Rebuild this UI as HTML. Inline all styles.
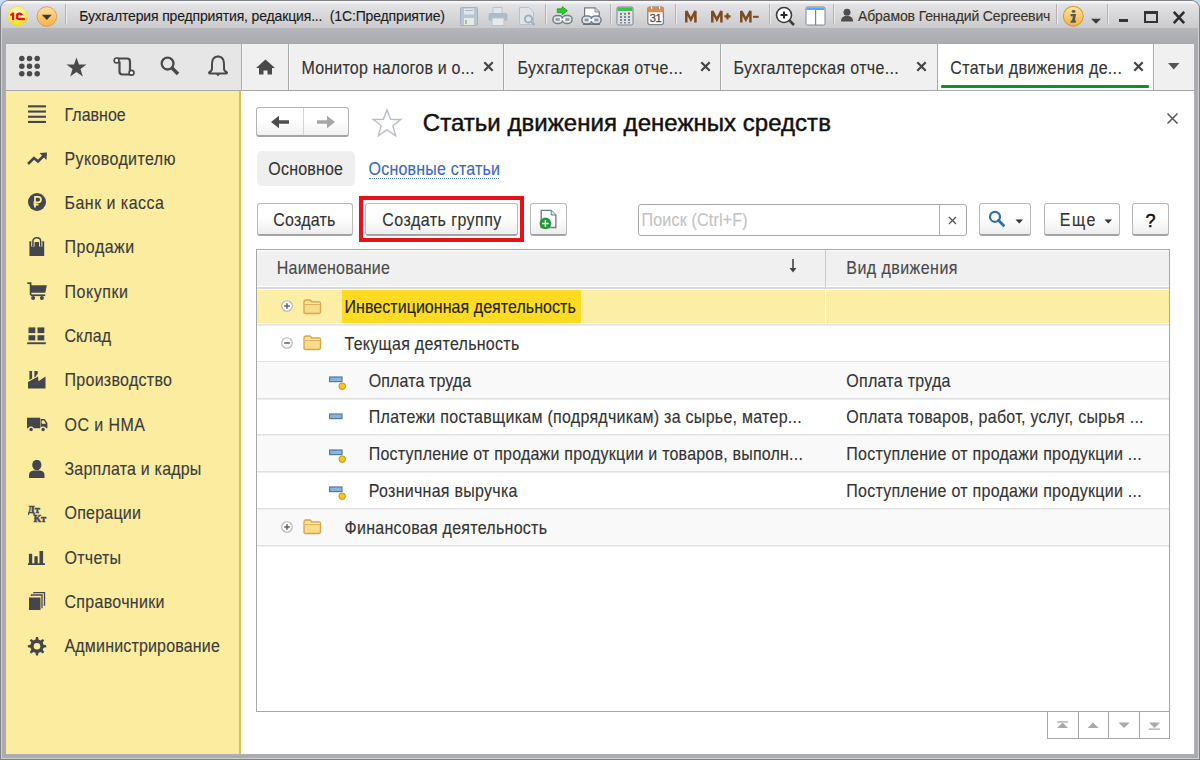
<!DOCTYPE html>
<html><head><meta charset="utf-8">
<style>
*{margin:0;padding:0;box-sizing:border-box}
html,body{width:1200px;height:760px;overflow:hidden;background:#bedcf5}
body{font-family:"Liberation Sans",sans-serif;position:relative}
.a{position:absolute}
.t{white-space:nowrap;-webkit-text-stroke:0.12px currentColor}
</style></head><body>
<div class="a" style="left:0.00px;top:0.00px;width:1200.00px;height:760.00px;background:#abacaf;border-radius:9px 9px 0 0;box-shadow:inset 0 0 0 1px #808184, inset 0 0 0 2px #cfd0d2"></div>
<div class="a" style="left:1.00px;top:1.00px;width:1198.00px;height:27.00px;border-radius:8px 8px 0 0;background:linear-gradient(#f6f6f7 0,#f6f6f7 1.5px,#e3e3e5 3.5px,#cbcbce 27px)"></div>
<div class="a" style="left:2.00px;top:28.00px;width:1196.00px;height:16.00px;background:linear-gradient(#b5b6b9,#aaabae)"></div>
<svg class="a" style="left:7.00px;top:6.00px" width="22" height="22" viewBox="0 0 22 22"><defs><radialGradient id="g1" cx="50%" cy="30%" r="70%"><stop offset="0" stop-color="#fffbd0"/><stop offset="0.55" stop-color="#fff070"/><stop offset="1" stop-color="#ffd800"/></radialGradient></defs>
<circle cx="10.65" cy="10.15" r="9.8" fill="url(#g1)" stroke="#efd35a" stroke-width="0.7"/>
<path d="M3.1 8.2 L5.6 6.6 L7.2 6.6 L7.2 14.1 L5 14.1 L5 9.4 L3.6 10.1 Z" fill="#e8101a"/>
<path d="M10.2 13 L10.2 9.3 Q10.2 7.7 12.3 7.7 Q14.3 7.7 15 9.3" fill="none" stroke="#e8101a" stroke-width="2.3"/>
<rect x="10.4" y="11.9" width="7.4" height="2.2" fill="#e8101a"/></svg>
<svg class="a" style="left:36.00px;top:6.00px" width="22" height="22" viewBox="0 0 22 22"><defs><linearGradient id="g2" x1="0" y1="0" x2="0" y2="1"><stop offset="0" stop-color="#ffe0a8"/><stop offset="1" stop-color="#fbb040"/></linearGradient></defs>
<circle cx="10.8" cy="10.5" r="9.8" fill="url(#g2)" stroke="#d6a24a" stroke-width="1"/>
<path d="M5.8 8.8 L15.8 8.8 L10.8 13.9 Z" fill="#3f3a32"/></svg>
<div class="a" style="left:65.00px;top:4.00px;width:1.00px;height:20.00px;background:#b3b3b5;box-shadow:1px 0 0 #ebebec"></div>
<div class="a t" style="left:79.20px;top:9.45px;font-size:14px;line-height:14px;color:#1b1b1b;letter-spacing:-0.15px">Бухгалтерия предприятия, редакция...&nbsp; (1С:Предприятие)</div>
<svg class="a" style="left:459.00px;top:7.00px" width="20" height="19" viewBox="0 0 20 19"><rect x="1.5" y="0.5" width="17" height="18" rx="1" fill="#b8c5d2" stroke="#a3b2c0"/>
<rect x="5" y="1.5" width="10" height="6" fill="#dfe6ec"/><rect x="6" y="3" width="8" height="1" fill="#a9b8c6"/>
<rect x="5" y="11" width="10" height="7" fill="#e6ece0"/><rect x="6" y="13" width="2" height="4" fill="#a9b8c6"/></svg>
<svg class="a" style="left:488.00px;top:7.00px" width="20" height="19" viewBox="0 0 20 19"><rect x="5" y="0.5" width="9" height="6" fill="#e2e6ea" stroke="#b9c3cc"/>
<rect x="0.5" y="6" width="19" height="8" rx="2" fill="#aebbc7"/>
<rect x="4" y="11" width="12" height="7.5" fill="#e6eaee" stroke="#b9c3cc"/></svg>
<svg class="a" style="left:518.00px;top:7.00px" width="20" height="20" viewBox="0 0 20 20"><path d="M1.5 0.5 L11 0.5 L15.5 5 L15.5 17.5 L1.5 17.5 Z" fill="#e0e4e8" stroke="#b7c2cc"/>
<circle cx="10.5" cy="12" r="3.6" fill="none" stroke="#9fb0be" stroke-width="2"/>
<path d="M13 14.5 L16.5 18" stroke="#9fb0be" stroke-width="2.2"/></svg>
<div class="a" style="left:545.00px;top:4.00px;width:1.00px;height:20.00px;background:#b3b3b5;box-shadow:1px 0 0 #ebebec"></div>
<svg class="a" style="left:551.00px;top:5.00px" width="23" height="20" viewBox="0 0 23 20"><path d="M6.3 3.8 L11.2 3.8 L11.2 1.6 L16.4 5.7 L11.2 9.8 L11.2 7.6 L6.3 7.6 Z" fill="#24d024" stroke="#129a1e" stroke-width="0.8"/><rect x="1.9" y="10.6" width="10" height="7.8" rx="3.9" fill="#e4e7ea" stroke="#737d88" stroke-width="1.5"/><rect x="11.1" y="10.6" width="10" height="7.8" rx="3.9" fill="#e4e7ea" stroke="#737d88" stroke-width="1.5"/><rect x="4.6" y="13.2" width="4.2" height="2.6" fill="#8e98a2"/><rect x="14.2" y="13.2" width="4.2" height="2.6" fill="#8e98a2"/><rect x="8.8" y="13.6" width="5.4" height="1.8" fill="#fff"/></svg>
<svg class="a" style="left:580.00px;top:6.00px" width="23" height="20" viewBox="0 0 23 20"><path d="M4.6 1.8 L15 1.8 L19.2 6 L19.2 11 L4.6 11 Z" fill="#fff" stroke="#6f7984" stroke-width="1.2"/><path d="M15 1.8 L15 6 L19.2 6" fill="#cfd6de" stroke="#6f7984" stroke-width="0.8"/><rect x="1.9" y="10.1" width="10" height="7.8" rx="3.9" fill="#e4e7ea" stroke="#737d88" stroke-width="1.5"/><rect x="11.1" y="10.1" width="10" height="7.8" rx="3.9" fill="#e4e7ea" stroke="#737d88" stroke-width="1.5"/><rect x="4.6" y="12.7" width="4.2" height="2.6" fill="#8e98a2"/><rect x="14.2" y="12.7" width="4.2" height="2.6" fill="#8e98a2"/><rect x="8.8" y="13.1" width="5.4" height="1.8" fill="#fff"/><rect x="3" y="17.6" width="17" height="1.2" fill="#5b6570"/></svg>
<div class="a" style="left:610.00px;top:4.00px;width:1.00px;height:20.00px;background:#b3b3b5;box-shadow:1px 0 0 #ebebec"></div>
<svg class="a" style="left:616.00px;top:6.00px" width="18" height="20" viewBox="0 0 18 20"><rect x="1" y="1" width="16" height="18" rx="1.5" fill="#dfe3e8" stroke="#7d8791"/>
<rect x="1.5" y="1.5" width="15" height="3.5" fill="#3fc04a"/>
<g fill="#7d8791"><rect x="4" y="7" width="2" height="2"/><rect x="8" y="7" width="2" height="2"/><rect x="4" y="10" width="2" height="2"/><rect x="8" y="10" width="2" height="2"/><rect x="12" y="10" width="2" height="2"/><rect x="4" y="13" width="2" height="2"/><rect x="8" y="13" width="2" height="2"/><rect x="12" y="13" width="2" height="2"/><rect x="4" y="16" width="2" height="1.5"/><rect x="8" y="16" width="2" height="1.5"/><rect x="12" y="16" width="2" height="1.5"/></g>
<rect x="12" y="6.5" width="2" height="2" fill="#e8383d"/></svg>
<svg class="a" style="left:646.00px;top:6.00px" width="19" height="20" viewBox="0 0 19 20"><rect x="1.8" y="1.2" width="15.6" height="17.4" rx="2" fill="#fff" stroke="#7d8791" stroke-width="1.3"/>
<path d="M1.2 6.3 L1.2 3.2 Q1.2 0.8 3.6 0.8 L15.6 0.8 Q18 0.8 18 3.2 L18 6.3 Z" fill="#d58b52"/>
<rect x="5" y="0.6" width="1.2" height="2.6" fill="#fff"/><rect x="13" y="0.6" width="1.2" height="2.6" fill="#fff"/>
<text x="9.6" y="16.2" font-family="Liberation Sans" font-size="11" text-anchor="middle" fill="#4d4d4d" stroke="#4d4d4d" stroke-width="0.3" letter-spacing="-0.3">31</text></svg>
<div class="a" style="left:675.00px;top:4.00px;width:1.00px;height:20.00px;background:#b3b3b5;box-shadow:1px 0 0 #ebebec"></div>
<svg class="a" style="left:685.00px;top:10.00px" width="12" height="13" viewBox="0 0 12 13"><path d="M1.3 12.6 L1.3 1 L5.85 9.6 L10.4 1 L10.4 12.6" fill="none" stroke="#7e4b1f" stroke-width="2.5" stroke-linejoin="miter"/></svg>
<svg class="a" style="left:711.00px;top:10.00px" width="21" height="13" viewBox="0 0 21 13"><path d="M1.3 12.6 L1.3 1 L5.85 9.6 L10.4 1 L10.4 12.6" fill="none" stroke="#7e4b1f" stroke-width="2.5" stroke-linejoin="miter"/><path d="M13.4 6.4 L19.6 6.4 M16.5 3.3 L16.5 9.5" stroke="#7e4b1f" stroke-width="2.2"/></svg>
<svg class="a" style="left:740.00px;top:10.00px" width="20" height="13" viewBox="0 0 20 13"><path d="M1.3 12.6 L1.3 1 L5.85 9.6 L10.4 1 L10.4 12.6" fill="none" stroke="#7e4b1f" stroke-width="2.5" stroke-linejoin="miter"/><path d="M13 6.8 L18.7 6.8" stroke="#7e4b1f" stroke-width="2"/></svg>
<div class="a" style="left:769.00px;top:4.00px;width:1.00px;height:20.00px;background:#b3b3b5;box-shadow:1px 0 0 #ebebec"></div>
<svg class="a" style="left:775.00px;top:6.00px" width="21" height="20" viewBox="0 0 21 20"><circle cx="9" cy="9" r="7.5" fill="#fff" stroke="#3a3a3a" stroke-width="1.6"/>
<path d="M5.5 9 L12.5 9 M9 5.5 L9 12.5" stroke="#2a2a2a" stroke-width="2"/>
<path d="M14.2 14.2 L19 19" stroke="#3a3a3a" stroke-width="2.6"/></svg>
<svg class="a" style="left:805.00px;top:6.00px" width="21" height="20" viewBox="0 0 21 20"><rect x="1" y="1" width="19" height="18" rx="1.5" fill="#fff" stroke="#7b8694"/>
<rect x="1.5" y="1.5" width="18" height="2.5" fill="#55a8ee"/>
<rect x="10" y="4" width="1.2" height="15" fill="#7b8694"/></svg>
<div class="a" style="left:833.00px;top:4.00px;width:1.00px;height:20.00px;background:#b3b3b5;box-shadow:1px 0 0 #ebebec"></div>
<svg class="a" style="left:840.00px;top:8.00px" width="14" height="14" viewBox="0 0 14 14"><circle cx="7" cy="4.2" r="3.5" fill="#4d4d4d"/><path d="M1 13.5 C1 9.5 3 8 7 8 C11 8 13 9.5 13 13.5 Z" fill="#4d4d4d"/></svg>
<div class="a t" style="left:858.00px;top:9.45px;font-size:14px;line-height:14px;color:#3a3228;letter-spacing:-0.13px">Абрамов Геннадий Сергеевич</div>
<div class="a" style="left:1056.00px;top:4.00px;width:1.00px;height:20.00px;background:#b3b3b5;box-shadow:1px 0 0 #ebebec"></div>
<svg class="a" style="left:1062.00px;top:5.00px" width="23" height="23" viewBox="0 0 23 23"><defs><linearGradient id="g3" x1="0" y1="0" x2="0" y2="1"><stop offset="0" stop-color="#ffe4a0"/><stop offset="1" stop-color="#f6b23e"/></linearGradient></defs>
<circle cx="11.3" cy="11.2" r="9.9" fill="url(#g3)" stroke="#c99e3e" stroke-width="1.1"/>
<ellipse cx="11.6" cy="6.4" rx="1.9" ry="1.3" fill="#58595a"/><path d="M8.8 8.9 L14.2 8.9 L12.9 15.4 L14.2 15.4 L13.6 17.8 L8.4 17.8 L8.9 15.4 L10 15.4 L10.9 11.2 L8.4 11.2 Z" fill="#58595a"/></svg>
<svg class="a" style="left:1090.00px;top:18.00px" width="12" height="7" viewBox="0 0 12 7"><path d="M1 0.8 L11 0.8 L6 5.8 Z" fill="#3c3c3c"/></svg>
<div class="a" style="left:1107.00px;top:4.00px;width:1.00px;height:20.00px;background:#b3b3b5;box-shadow:1px 0 0 #ebebec"></div>
<div class="a" style="left:1118.50px;top:18.80px;width:9.50px;height:3.00px;background:#333"></div>
<div class="a" style="left:1144.40px;top:10.60px;width:13.60px;height:12.60px;border:2px solid #333;border-top-width:3px"></div>
<svg class="a" style="left:1172.00px;top:10.00px" width="14" height="15" viewBox="0 0 14 15"><path d="M1.8 1.8 L12.2 13.2 M12.2 1.8 L1.8 13.2" stroke="#2e2e2e" stroke-width="2.6"/></svg>
<div class="a" style="left:6.00px;top:44.00px;width:1188.00px;height:710.00px;background:#fff"></div>
<div class="a" style="left:6.00px;top:44.00px;width:235.00px;height:46.00px;background:#e6e6e6"></div>
<div class="a" style="left:241.00px;top:44.00px;width:953.00px;height:46.00px;background:#f0f0f0"></div>
<div class="a" style="left:6.00px;top:90.00px;width:1188.00px;height:1.00px;background:#a8a8a8"></div>
<svg class="a" style="left:18.00px;top:55.00px" width="24" height="24" viewBox="0 0 24 24"><circle cx="3.8" cy="3.5" r="2.75" fill="#4a4a4a"/><circle cx="3.8" cy="11.2" r="2.75" fill="#4a4a4a"/><circle cx="3.8" cy="18.8" r="2.75" fill="#4a4a4a"/><circle cx="11.5" cy="3.5" r="2.75" fill="#4a4a4a"/><circle cx="11.5" cy="11.2" r="2.75" fill="#4a4a4a"/><circle cx="11.5" cy="18.8" r="2.75" fill="#4a4a4a"/><circle cx="19.2" cy="3.5" r="2.75" fill="#4a4a4a"/><circle cx="19.2" cy="11.2" r="2.75" fill="#4a4a4a"/><circle cx="19.2" cy="18.8" r="2.75" fill="#4a4a4a"/></svg>
<svg class="a" style="left:66.00px;top:57.00px" width="21" height="21" viewBox="0 0 21 21"><path d="M10.5 0.5 L13 7.6 L20.5 7.6 L14.5 12.1 L16.8 19.5 L10.5 15 L4.2 19.5 L6.5 12.1 L0.5 7.6 L8 7.6 Z" fill="#4a4a4a"/></svg>
<svg class="a" style="left:113.00px;top:56.00px" width="23" height="21" viewBox="0 0 23 21"><path d="M3.4 2.5 L14 2.5 Q17 2.5 17 5.5 L17 16.5 M6.5 5.5 L6.5 15.5 Q6.5 18.5 9.5 18.5 L18.5 18.5" fill="none" stroke="#4a4a4a" stroke-width="2.2"/>
<circle cx="3.6" cy="4.4" r="2.4" fill="#fff" stroke="#4a4a4a" stroke-width="1.7"/><circle cx="18.5" cy="16.8" r="2.4" fill="#fff" stroke="#4a4a4a" stroke-width="1.7"/></svg>
<svg class="a" style="left:160.00px;top:56.00px" width="21" height="21" viewBox="0 0 21 21"><circle cx="7.6" cy="7.6" r="5.9" fill="none" stroke="#4a4a4a" stroke-width="2.3"/><path d="M11.8 11.8 L18 18" stroke="#4a4a4a" stroke-width="3.5"/></svg>
<svg class="a" style="left:207.00px;top:55.00px" width="22" height="23" viewBox="0 0 22 23"><path d="M11 1.5 C7 1.5 5 4.5 5 9 L5 13.5 Q5 16 2.5 17 Q1.5 17.8 2.5 18.5 L19.5 18.5 Q20.5 17.8 19.5 17 Q17 16 17 13.5 L17 9 C17 4.5 15 1.5 11 1.5 Z" fill="none" stroke="#4a4a4a" stroke-width="2"/>
<path d="M9 19 L11 21.5 L13 19 Z" fill="#4a4a4a"/><path d="M9.8 1.5 L11 0.3 L12.2 1.5 Z" fill="#4a4a4a"/></svg>
<div class="a" style="left:241.00px;top:44.00px;width:1.00px;height:46.00px;background:#a8a8a8;box-shadow:1px 0 0 #f8f8f8"></div>
<svg class="a" style="left:255.00px;top:58.00px" width="21" height="18" viewBox="0 0 21 18"><path d="M10.5 1.5 L20 10 L17 10 L17 16.5 L12.5 16.5 L12.5 12.5 L8.5 12.5 L8.5 16.5 L4 16.5 L4 10 L1 10 Z" fill="#4a4a4a"/></svg>
<div class="a" style="left:288.00px;top:44.00px;width:1.00px;height:46.00px;background:#a8a8a8;box-shadow:1px 0 0 #f8f8f8"></div>
<div class="a t" style="left:301.50px;top:59.76px;font-size:16px;line-height:16px;color:#333;transform:scaleY(1.09);transform-origin:0 5px;letter-spacing:0.2px;">Монитор налогов и о...</div>
<svg class="a" style="left:482.70px;top:60.50px" width="11" height="11" viewBox="0 0 11 11"><path d="M1.3 1.3 L9.7 9.7 M9.7 1.3 L1.3 9.7" stroke="#444" stroke-width="2.2"/></svg>
<div class="a" style="left:503.00px;top:44.00px;width:1.00px;height:46.00px;background:#a8a8a8;box-shadow:1px 0 0 #f8f8f8"></div>
<div class="a t" style="left:517.50px;top:59.76px;font-size:16px;line-height:16px;color:#333;transform:scaleY(1.09);transform-origin:0 5px;letter-spacing:0.33px;">Бухгалтерская отче...</div>
<svg class="a" style="left:699.70px;top:60.50px" width="11" height="11" viewBox="0 0 11 11"><path d="M1.3 1.3 L9.7 9.7 M9.7 1.3 L1.3 9.7" stroke="#444" stroke-width="2.2"/></svg>
<div class="a" style="left:720.00px;top:44.00px;width:1.00px;height:46.00px;background:#a8a8a8;box-shadow:1px 0 0 #f8f8f8"></div>
<div class="a t" style="left:733.50px;top:59.76px;font-size:16px;line-height:16px;color:#333;transform:scaleY(1.09);transform-origin:0 5px;letter-spacing:0.33px;">Бухгалтерская отче...</div>
<svg class="a" style="left:915.70px;top:60.50px" width="11" height="11" viewBox="0 0 11 11"><path d="M1.3 1.3 L9.7 9.7 M9.7 1.3 L1.3 9.7" stroke="#444" stroke-width="2.2"/></svg>
<div class="a" style="left:937.00px;top:44.00px;width:1.00px;height:46.00px;background:#a8a8a8;box-shadow:1px 0 0 #f8f8f8"></div>
<div class="a" style="left:938.00px;top:44.00px;width:215.00px;height:46.00px;background:#fff"></div>
<div class="a t" style="left:950.30px;top:59.76px;font-size:16px;line-height:16px;color:#333;transform:scaleY(1.09);transform-origin:0 5px;letter-spacing:0.32px;">Статьи движения де...</div>
<svg class="a" style="left:1132.70px;top:60.50px" width="11" height="11" viewBox="0 0 11 11"><path d="M1.3 1.3 L9.7 9.7 M9.7 1.3 L1.3 9.7" stroke="#444" stroke-width="2.2"/></svg>
<div class="a" style="left:941.00px;top:85.00px;width:208.00px;height:2.50px;background:#0b8f2f;border-radius:1px"></div>
<div class="a" style="left:1153.00px;top:44.00px;width:1.00px;height:46.00px;background:#a8a8a8;box-shadow:1px 0 0 #f8f8f8"></div>
<svg class="a" style="left:1167.00px;top:62.00px" width="14" height="9" viewBox="0 0 14 9"><path d="M1 1 L12.5 1 L6.75 7.5 Z" fill="#555"/></svg>
<div class="a" style="left:6.00px;top:91.00px;width:233.00px;height:663.00px;background:#fbeca0"></div>
<div class="a" style="left:239.00px;top:91.00px;width:2.00px;height:663.00px;background:#d5c15a"></div>
<div class="a t" style="left:64.50px;top:106.56px;font-size:16px;line-height:16px;color:#3c3c3c;transform:scaleY(1.09);transform-origin:0 5px;letter-spacing:0.02px;">Главное</div>
<svg class="a" style="left:28.00px;top:105.00px" width="22" height="22" viewBox="0 0 22 22"><g fill="#45464b"><rect x="0" y="0.3" width="18" height="2.1"/><rect x="0" y="5.5" width="18" height="2.1"/><rect x="0" y="10.7" width="18" height="2.1"/><rect x="0" y="15.9" width="18" height="2.1"/></g></svg>
<div class="a t" style="left:64.50px;top:150.86px;font-size:16px;line-height:16px;color:#3c3c3c;transform:scaleY(1.09);transform-origin:0 5px;letter-spacing:0.38px;">Руководителю</div>
<svg class="a" style="left:26.80px;top:151.50px" width="22" height="22" viewBox="0 0 22 22"><path d="M1 12 L7 6 L11 9.5 L17.5 3" fill="none" stroke="#45464b" stroke-width="2.6"/><path d="M12.5 1 L20 0.5 L19.5 8 Z" fill="#45464b"/></svg>
<div class="a t" style="left:64.50px;top:195.16px;font-size:16px;line-height:16px;color:#3c3c3c;transform:scaleY(1.09);transform-origin:0 5px;letter-spacing:0.47px;">Банк и касса</div>
<svg class="a" style="left:27.80px;top:193.20px" width="22" height="22" viewBox="0 0 22 22"><circle cx="9" cy="9" r="9" fill="#45464b"/><path d="M7 14.5 L7 3.8 L10.3 3.8 Q13 3.8 13 6.6 Q13 9.4 10.3 9.4 L5.5 9.4 M5.5 11.7 L10.5 11.7" fill="none" stroke="#fbeca0" stroke-width="1.7"/></svg>
<div class="a t" style="left:64.50px;top:239.46px;font-size:16px;line-height:16px;color:#3c3c3c;transform:scaleY(1.09);transform-origin:0 5px;letter-spacing:0.48px;">Продажи</div>
<svg class="a" style="left:29.00px;top:236.80px" width="22" height="22" viewBox="0 0 22 22"><rect x="0.4" y="5" width="14.8" height="14" fill="#45464b"/><path d="M3.9 9.5 L3.9 4.4 Q3.9 0.8 7.8 0.8 Q11.7 0.8 11.7 4.4 L11.7 9.5" fill="none" stroke="#fbeca0" stroke-width="3.4"/><path d="M3.9 9.5 L3.9 4.4 Q3.9 0.8 7.8 0.8 Q11.7 0.8 11.7 4.4 L11.7 9.5" fill="none" stroke="#45464b" stroke-width="1.5"/><rect x="0.4" y="4.3" width="2" height="1" fill="#45464b"/><rect x="13.2" y="4.3" width="2" height="1" fill="#45464b"/></svg>
<div class="a t" style="left:64.50px;top:283.76px;font-size:16px;line-height:16px;color:#3c3c3c;transform:scaleY(1.09);transform-origin:0 5px;letter-spacing:0.53px;">Покупки</div>
<svg class="a" style="left:26.50px;top:282.00px" width="22" height="22" viewBox="0 0 22 22"><path d="M0.3 1.2 L3.6 1.2 L3.6 13" fill="none" stroke="#45464b" stroke-width="1.7"/><path d="M3.6 3.3 L19.9 3.3 L18.3 10.8 L4.2 10.8 Z" fill="#45464b"/><rect x="3.6" y="12.4" width="14.6" height="1.7" fill="#45464b"/><circle cx="6.1" cy="15.9" r="2" fill="#45464b"/><circle cx="14.9" cy="15.9" r="2" fill="#45464b"/></svg>
<div class="a t" style="left:64.50px;top:328.06px;font-size:16px;line-height:16px;color:#3c3c3c;transform:scaleY(1.09);transform-origin:0 5px;letter-spacing:0.05px;">Склад</div>
<svg class="a" style="left:26.60px;top:326.70px" width="22" height="22" viewBox="0 0 22 22"><g fill="#45464b"><rect x="1.5" y="0.4" width="6.8" height="5.7"/><rect x="10.5" y="0.4" width="6.8" height="5.7"/><rect x="1.5" y="8.2" width="6.8" height="5.2"/><rect x="10.5" y="8.2" width="6.8" height="5.2"/><rect x="0.2" y="15.3" width="18.6" height="1.9"/></g></svg>
<div class="a t" style="left:64.50px;top:372.36px;font-size:16px;line-height:16px;color:#3c3c3c;transform:scaleY(1.09);transform-origin:0 5px;letter-spacing:0.28px;">Производство</div>
<svg class="a" style="left:28.00px;top:371.00px" width="22" height="22" viewBox="0 0 22 22"><path d="M0 17.6 L0 11 L10 5.4 L10.5 10.2 L17.5 5.4 L17.5 17.6 Z" fill="#45464b"/><path d="M1.4 0 L4.1 0 L4.1 7.6 L1.4 9.1 Z" fill="#45464b"/><path d="M6.4 0 L9.7 0 L9.7 2.4 L7.6 5.8 L6.4 6.5 Z" fill="#45464b"/></svg>
<div class="a t" style="left:64.50px;top:416.66px;font-size:16px;line-height:16px;color:#3c3c3c;transform:scaleY(1.09);transform-origin:0 5px;letter-spacing:0.43px;">ОС и НМА</div>
<svg class="a" style="left:26.60px;top:417.30px" width="22" height="22" viewBox="0 0 22 22"><rect x="0" y="0.7" width="13.2" height="10.6" fill="#45464b"/><path d="M13.6 2.1 L17.6 2.1 L20.4 6 L20.4 11.3 L13.6 11.3 Z" fill="#45464b"/><path d="M14.7 3.4 L17 3.4 L19 6.7 L14.7 6.7 Z" fill="#fbeca0"/><circle cx="4.1" cy="12.6" r="2.4" fill="#45464b" stroke="#fbeca0" stroke-width="1.3"/><circle cx="16.1" cy="12.6" r="2.4" fill="#45464b" stroke="#fbeca0" stroke-width="1.3"/></svg>
<div class="a t" style="left:64.50px;top:460.96px;font-size:16px;line-height:16px;color:#3c3c3c;transform:scaleY(1.09);transform-origin:0 5px;letter-spacing:0.2px;">Зарплата и кадры</div>
<svg class="a" style="left:28.90px;top:459.80px" width="22" height="22" viewBox="0 0 22 22"><ellipse cx="7.8" cy="5" rx="4.6" ry="5.2" fill="#45464b"/><path d="M0 18 L0 15 Q0 11 4.5 10.5 L11 10.5 Q15.5 11 15.5 15 L15.5 18 Z" fill="#45464b"/></svg>
<div class="a t" style="left:64.50px;top:505.26px;font-size:16px;line-height:16px;color:#3c3c3c;transform:scaleY(1.09);transform-origin:0 5px;letter-spacing:0.22px;">Операции</div>
<svg class="a" style="left:28.00px;top:505.00px" width="22" height="22" viewBox="0 0 22 22"><text x="-0.5" y="7.6" font-family="Liberation Serif" font-weight="bold" font-size="10.5" fill="#45464b" stroke="#45464b" stroke-width="0.5">Дт</text><text x="5.6" y="16.8" font-family="Liberation Serif" font-weight="bold" font-size="10.5" fill="#45464b" stroke="#45464b" stroke-width="0.5">Кт</text></svg>
<div class="a t" style="left:64.50px;top:549.56px;font-size:16px;line-height:16px;color:#3c3c3c;transform:scaleY(1.09);transform-origin:0 5px;letter-spacing:0.26px;">Отчеты</div>
<svg class="a" style="left:28.00px;top:551.00px" width="22" height="22" viewBox="0 0 22 22"><g fill="#45464b"><rect x="0.9" y="2.8" width="3.3" height="10.2"/><rect x="6.4" y="5.2" width="3.3" height="7.8"/><rect x="11.5" y="0" width="3.6" height="13"/><rect x="0" y="12.3" width="17" height="1.7"/></g></svg>
<div class="a t" style="left:64.50px;top:593.86px;font-size:16px;line-height:16px;color:#3c3c3c;transform:scaleY(1.09);transform-origin:0 5px;letter-spacing:0.3px;">Справочники</div>
<svg class="a" style="left:28.90px;top:592.30px" width="22" height="22" viewBox="0 0 22 22"><rect x="0" y="5.5" width="11.5" height="12.5" fill="#45464b"/><path d="M2.5 4 L2.5 3 L13 3 L13 15.5 L12.5 15.5" fill="none" stroke="#45464b" stroke-width="1.3"/><path d="M5 1.5 L5 0.7 L15.5 0.7 L15.5 13 L14.7 13" fill="none" stroke="#45464b" stroke-width="1.3"/></svg>
<div class="a t" style="left:64.50px;top:638.16px;font-size:16px;line-height:16px;color:#3c3c3c;transform:scaleY(1.09);transform-origin:0 5px;letter-spacing:0.17px;">Администрирование</div>
<svg class="a" style="left:27.00px;top:637.00px" width="22" height="22" viewBox="0 0 22 22"><path d="M9 0 L11 0 L11.5 2.6 L13.6 3.5 L15.8 2 L17.2 3.4 L15.7 5.6 L16.6 7.7 L19.2 8.2 L19.2 10.2 L16.6 10.7 L15.7 12.8 L17.2 15 L15.8 16.4 L13.6 14.9 L11.5 15.8 L11 18.4 L9 18.4 L8.5 15.8 L6.4 14.9 L4.2 16.4 L2.8 15 L4.3 12.8 L3.4 10.7 L0.8 10.2 L0.8 8.2 L3.4 7.7 L4.3 5.6 L2.8 3.4 L4.2 2 L6.4 3.5 L8.5 2.6 Z" fill="#45464b"/><circle cx="10" cy="9.2" r="3.3" fill="#fbeca0"/></svg>
<div class="a" style="left:256.20px;top:106.50px;width:93.30px;height:30.50px;border:1px solid #b4b4b4;border-bottom:2px solid #a4a4a4;border-radius:3px;background:linear-gradient(#fff 40%,#f1f1f1)"></div>
<div class="a" style="left:303.20px;top:107.50px;width:1.00px;height:27.50px;background:#d4d4d4"></div>
<svg class="a" style="left:270.00px;top:115.00px" width="20" height="15" viewBox="0 0 20 15"><path d="M1 7 L9 0.8 L9 5.3 L19 5.3 L19 8.7 L9 8.7 L9 13.2 Z" fill="#4d4d4d"/></svg>
<svg class="a" style="left:316.00px;top:115.00px" width="20" height="15" viewBox="0 0 20 15"><path d="M19 7 L11 0.8 L11 5.3 L1 5.3 L1 8.7 L11 8.7 L11 13.2 Z" fill="#a6a6a6"/></svg>
<svg class="a" style="left:371.00px;top:108.00px" width="32" height="30" viewBox="0 0 32 30"><path d="M16 1.8 L19.6 11.3 L29.8 11.5 L21.8 17.8 L24.6 27.6 L16 21.9 L7.4 27.6 L10.2 17.8 L2.2 11.5 L12.4 11.3 Z" fill="none" stroke="#b9bec6" stroke-width="1.4"/></svg>
<div class="a t" style="left:422.80px;top:110.98px;font-size:24px;line-height:24px;color:#111;letter-spacing:0.03px;-webkit-text-stroke:0.45px #111">Статьи движения денежных средств</div>
<svg class="a" style="left:1166.00px;top:112.00px" width="13" height="13" viewBox="0 0 13 13"><path d="M1.5 1.5 L11.5 11.5 M11.5 1.5 L1.5 11.5" stroke="#555" stroke-width="1.5"/></svg>
<div class="a" style="left:256.50px;top:151.00px;width:98.20px;height:34.70px;background:#efefef;border-radius:5px"></div>
<div class="a t" style="left:268.30px;top:161.16px;font-size:16px;line-height:16px;color:#333;transform:scaleY(1.09);transform-origin:0 5px;letter-spacing:0.2px;">Основное</div>
<div class="a t" style="left:368.60px;top:161.16px;font-size:16px;line-height:16px;color:#3b67c2;transform:scaleY(1.09);transform-origin:0 5px;letter-spacing:0.2px;">Основные статьи</div>
<div class="a" style="left:369.00px;top:177.50px;width:129.50px;height:1.30px;border-top:1.3px dotted #4a74c8"></div>
<div class="a" style="left:256.50px;top:203.00px;width:96.50px;height:32.80px;border:1px solid #b9b9b9;border-bottom:2px solid #a3a3a3;border-radius:3px;background:linear-gradient(#fff 45%,#eeeeee)"></div>
<div class="a t" style="left:273.30px;top:211.66px;font-size:16px;line-height:16px;color:#333;transform:scaleY(1.09);transform-origin:0 5px;letter-spacing:0.2px;">Создать</div>
<div class="a" style="left:359.00px;top:196.30px;width:165.40px;height:45.40px;border:4px solid #e5111b"></div>
<div class="a" style="left:365.00px;top:203.00px;width:153.30px;height:32.80px;border:1px solid #b9b9b9;border-bottom:2px solid #a3a3a3;border-radius:3px;background:linear-gradient(#fff 45%,#eeeeee)"></div>
<div class="a t" style="left:382.30px;top:211.66px;font-size:16px;line-height:16px;color:#333;transform:scaleY(1.09);transform-origin:0 5px;letter-spacing:0.45px;">Создать группу</div>
<div class="a" style="left:530.00px;top:203.00px;width:37.20px;height:32.80px;border:1px solid #b9b9b9;border-bottom:2px solid #a3a3a3;border-radius:3px;background:linear-gradient(#fff 45%,#eeeeee)"></div>
<svg class="a" style="left:538.00px;top:207.00px" width="24" height="24" viewBox="0 0 24 24"><path d="M3.2 3.3 L13.2 3.3 L17.9 8 L17.9 20.5 L3.2 20.5 Z" fill="#fff" stroke="#6c7a8a" stroke-width="1.3"/><path d="M13.2 3.3 L13.2 8 L17.9 8" fill="#dfe6ee" stroke="#6c7a8a" stroke-width="1"/>
<circle cx="7.4" cy="16.4" r="5.8" fill="#1e9a34"/><path d="M4 16.4 L10.8 16.4 M7.4 13 L7.4 19.8" stroke="#fff" stroke-width="1.5"/></svg>
<div class="a" style="left:637.50px;top:204.00px;width:329.00px;height:31.50px;border:1.5px solid #a9a9a9;border-radius:3px;background:#fff"></div>
<div class="a" style="left:939.00px;top:205.00px;width:1.30px;height:29.50px;background:#b5b5b5"></div>
<div class="a t" style="left:641.50px;top:211.66px;font-size:16px;line-height:16px;color:#c3c3c3;transform:scaleY(1.09);transform-origin:0 5px;letter-spacing:0.2px;">Поиск (Ctrl+F)</div>
<svg class="a" style="left:948.00px;top:216.00px" width="9" height="9" viewBox="0 0 9 9"><path d="M1 1 L8 8 M8 1 L1 8" stroke="#555" stroke-width="1.3"/></svg>
<div class="a" style="left:978.50px;top:203.00px;width:52.30px;height:32.80px;border:1px solid #b9b9b9;border-bottom:2px solid #a3a3a3;border-radius:3px;background:linear-gradient(#fff 45%,#eeeeee)"></div>
<svg class="a" style="left:988.00px;top:210.00px" width="18" height="18" viewBox="0 0 18 18"><circle cx="7" cy="6.8" r="5" fill="none" stroke="#2a6ea8" stroke-width="2.2"/><path d="M10.5 10.3 L15.5 15.5" stroke="#2a6ea8" stroke-width="2.8" stroke-linecap="round"/></svg>
<svg class="a" style="left:1015.00px;top:219.00px" width="9" height="5" viewBox="0 0 9 5"><path d="M0.5 0.5 L8 0.5 L4.25 4.5 Z" fill="#333"/></svg>
<div class="a" style="left:1043.50px;top:203.00px;width:76.10px;height:32.80px;border:1px solid #b9b9b9;border-bottom:2px solid #a3a3a3;border-radius:3px;background:linear-gradient(#fff 45%,#eeeeee)"></div>
<div class="a t" style="left:1059.80px;top:211.66px;font-size:16px;line-height:16px;color:#333;transform:scaleY(1.09);transform-origin:0 5px;letter-spacing:1.5px;">Еще</div>
<svg class="a" style="left:1104.00px;top:219.00px" width="9" height="5" viewBox="0 0 9 5"><path d="M0.5 0.5 L8 0.5 L4.25 4.5 Z" fill="#333"/></svg>
<div class="a" style="left:1132.00px;top:203.00px;width:37.00px;height:32.80px;border:1px solid #b9b9b9;border-bottom:2px solid #a3a3a3;border-radius:3px;background:linear-gradient(#fff 45%,#eeeeee)"></div>
<div class="a t" style="left:1145.50px;top:211.56px;font-size:18px;line-height:18px;color:#111;-webkit-text-stroke:0.5px #111">?</div>
<div class="a" style="left:256.00px;top:249.00px;width:914.00px;height:463.00px;border:1px solid #a7a7a7;background:#fff"></div>
<div class="a" style="left:257.00px;top:250.00px;width:912.00px;height:36.00px;background:#f0f0f0;box-shadow:inset 0 1px 0 #fff"></div>
<div class="a" style="left:257.00px;top:287.00px;width:912.00px;height:1.80px;background:#d9d9dd"></div>
<div class="a" style="left:825.00px;top:250.00px;width:1.00px;height:37.00px;background:#c9c9c9"></div>
<div class="a t" style="left:276.80px;top:260.06px;font-size:16px;line-height:16px;color:#4a4a4a;transform:scaleY(1.09);transform-origin:0 5px;letter-spacing:0.2px;">Наименование</div>
<svg class="a" style="left:788.00px;top:258.00px" width="10" height="16" viewBox="0 0 10 16"><path d="M5 1 L5 12" stroke="#444" stroke-width="1.6"/><path d="M1.5 10 L8.5 10 L5 14.5 Z" fill="#444"/></svg>
<div class="a t" style="left:846.30px;top:260.06px;font-size:16px;line-height:16px;color:#4a4a4a;transform:scaleY(1.09);transform-origin:0 5px;letter-spacing:0.45px;">Вид движения</div>
<div class="a" style="left:257.00px;top:289.90px;width:912.00px;height:33.10px;background:#fcefa5"></div>
<div class="a" style="left:825.00px;top:289.90px;width:1.00px;height:33.10px;background:#fff"></div>
<div class="a" style="left:342.00px;top:289.90px;width:239.20px;height:33.10px;background:#fcdb22"></div>
<div class="a" style="left:257.00px;top:324.00px;width:912.00px;height:1.00px;background:#e1e1e4"></div>
<div class="a" style="left:257.00px;top:325.00px;width:912.00px;height:1.00px;background:#eeeef0"></div>
<svg class="a" style="left:281.00px;top:300.00px" width="12" height="12" viewBox="0 0 12 12"><circle cx="6" cy="6" r="5.3" fill="#fafafa" stroke="#b4b4b4" stroke-width="1.1"/><path d="M3.2 6 L8.8 6" stroke="#6a6a6a" stroke-width="1.6"/><path d="M6 3.2 L6 8.8" stroke="#6a6a6a" stroke-width="1.6"/></svg>
<svg class="a" style="left:302.50px;top:298.50px" width="19" height="16" viewBox="0 0 19 16"><path d="M1 3 Q1 1 3 1 L7 1 L9 3 L16 3 Q17.5 3 17.5 4.5 L17.5 13 Q17.5 14.5 16 14.5 L2.5 14.5 Q1 14.5 1 13 Z" fill="#f8dc8b" stroke="#d5a44c" stroke-width="1.3"/><path d="M1.7 5.6 L16.8 5.6" stroke="#d9ae5e" stroke-width="1"/><path d="M1.7 4.4 L16.8 4.4" stroke="#fbe9b0" stroke-width="1.2"/></svg>
<div class="a t" style="left:344.50px;top:298.96px;font-size:16px;line-height:16px;color:#222;transform:scaleY(1.09);transform-origin:0 5px;letter-spacing:0.05px;">Инвестиционная деятельность</div>
<div class="a" style="left:257.00px;top:361.00px;width:912.00px;height:1.00px;background:#e1e1e4"></div>
<div class="a" style="left:257.00px;top:362.00px;width:912.00px;height:1.00px;background:#eeeef0"></div>
<svg class="a" style="left:281.00px;top:336.83px" width="12" height="12" viewBox="0 0 12 12"><circle cx="6" cy="6" r="5.3" fill="#fafafa" stroke="#b4b4b4" stroke-width="1.1"/><path d="M3.2 6 L8.8 6" stroke="#6a6a6a" stroke-width="1.6"/></svg>
<svg class="a" style="left:302.50px;top:335.33px" width="19" height="16" viewBox="0 0 19 16"><path d="M1 3 Q1 1 3 1 L7 1 L9 3 L16 3 Q17.5 3 17.5 4.5 L17.5 13 Q17.5 14.5 16 14.5 L2.5 14.5 Q1 14.5 1 13 Z" fill="#f8dc8b" stroke="#d5a44c" stroke-width="1.3"/><path d="M1.7 5.6 L16.8 5.6" stroke="#d9ae5e" stroke-width="1"/><path d="M1.7 4.4 L16.8 4.4" stroke="#fbe9b0" stroke-width="1.2"/></svg>
<div class="a t" style="left:344.50px;top:335.79px;font-size:16px;line-height:16px;color:#333;transform:scaleY(1.09);transform-origin:0 5px;letter-spacing:0.27px;">Текущая деятельность</div>
<div class="a" style="left:257.00px;top:362.00px;width:912.00px;height:36.00px;background:#f9f9f9"></div>
<div class="a" style="left:257.00px;top:398.00px;width:912.00px;height:1.00px;background:#e1e1e4"></div>
<div class="a" style="left:257.00px;top:399.00px;width:912.00px;height:1.00px;background:#eeeef0"></div>
<svg class="a" style="left:329.00px;top:375.76px" width="18" height="16" viewBox="0 0 18 16"><rect x="0.6" y="1" width="12.4" height="4.6" fill="#8db4da" stroke="#4f7aa3" stroke-width="1.2"/><circle cx="13.2" cy="10.2" r="3.3" fill="#f5c520" stroke="#c49a10" stroke-width="1"/></svg>
<div class="a t" style="left:368.80px;top:372.62px;font-size:16px;line-height:16px;color:#333;transform:scaleY(1.09);transform-origin:0 5px;letter-spacing:0.1px;">Оплата труда</div>
<div class="a t" style="left:846.30px;top:372.62px;font-size:16px;line-height:16px;color:#333;transform:scaleY(1.09);transform-origin:0 5px;letter-spacing:0.27px;">Оплата труда</div>
<div class="a" style="left:257.00px;top:434.00px;width:912.00px;height:1.00px;background:#e1e1e4"></div>
<div class="a" style="left:257.00px;top:435.00px;width:912.00px;height:1.00px;background:#eeeef0"></div>
<svg class="a" style="left:329.00px;top:412.59px" width="18" height="16" viewBox="0 0 18 16"><rect x="0.6" y="1" width="12.4" height="4.6" fill="#8db4da" stroke="#4f7aa3" stroke-width="1.2"/></svg>
<div class="a t" style="left:368.80px;top:409.45px;font-size:16px;line-height:16px;color:#333;transform:scaleY(1.09);transform-origin:0 5px;letter-spacing:0.27px;">Платежи поставщикам (подрядчикам) за сырье, матер...</div>
<div class="a t" style="left:846.30px;top:409.45px;font-size:16px;line-height:16px;color:#333;transform:scaleY(1.09);transform-origin:0 5px;letter-spacing:0.27px;">Оплата товаров, работ, услуг, сырья ...</div>
<div class="a" style="left:257.00px;top:436.00px;width:912.00px;height:36.00px;background:#f9f9f9"></div>
<div class="a" style="left:257.00px;top:471.00px;width:912.00px;height:1.00px;background:#e1e1e4"></div>
<div class="a" style="left:257.00px;top:472.00px;width:912.00px;height:1.00px;background:#eeeef0"></div>
<svg class="a" style="left:329.00px;top:449.42px" width="18" height="16" viewBox="0 0 18 16"><rect x="0.6" y="1" width="12.4" height="4.6" fill="#8db4da" stroke="#4f7aa3" stroke-width="1.2"/><circle cx="13.2" cy="10.2" r="3.3" fill="#f5c520" stroke="#c49a10" stroke-width="1"/></svg>
<div class="a t" style="left:368.80px;top:446.28px;font-size:16px;line-height:16px;color:#333;transform:scaleY(1.09);transform-origin:0 5px;letter-spacing:0.21px;">Поступление от продажи продукции и товаров, выполн...</div>
<div class="a t" style="left:846.30px;top:446.28px;font-size:16px;line-height:16px;color:#333;transform:scaleY(1.09);transform-origin:0 5px;letter-spacing:0.27px;">Поступление от продажи продукции ...</div>
<div class="a" style="left:257.00px;top:508.00px;width:912.00px;height:1.00px;background:#e1e1e4"></div>
<div class="a" style="left:257.00px;top:509.00px;width:912.00px;height:1.00px;background:#eeeef0"></div>
<svg class="a" style="left:329.00px;top:486.25px" width="18" height="16" viewBox="0 0 18 16"><rect x="0.6" y="1" width="12.4" height="4.6" fill="#8db4da" stroke="#4f7aa3" stroke-width="1.2"/><circle cx="13.2" cy="10.2" r="3.3" fill="#f5c520" stroke="#c49a10" stroke-width="1"/></svg>
<div class="a t" style="left:368.80px;top:483.11px;font-size:16px;line-height:16px;color:#333;transform:scaleY(1.09);transform-origin:0 5px;letter-spacing:0.27px;">Розничная выручка</div>
<div class="a t" style="left:846.30px;top:483.11px;font-size:16px;line-height:16px;color:#333;transform:scaleY(1.09);transform-origin:0 5px;letter-spacing:0.27px;">Поступление от продажи продукции ...</div>
<div class="a" style="left:257.00px;top:510.00px;width:912.00px;height:35.00px;background:#f9f9f9"></div>
<div class="a" style="left:257.00px;top:545.00px;width:912.00px;height:1.00px;background:#e1e1e4"></div>
<div class="a" style="left:257.00px;top:546.00px;width:912.00px;height:1.00px;background:#eeeef0"></div>
<svg class="a" style="left:281.00px;top:520.98px" width="12" height="12" viewBox="0 0 12 12"><circle cx="6" cy="6" r="5.3" fill="#fafafa" stroke="#b4b4b4" stroke-width="1.1"/><path d="M3.2 6 L8.8 6" stroke="#6a6a6a" stroke-width="1.6"/><path d="M6 3.2 L6 8.8" stroke="#6a6a6a" stroke-width="1.6"/></svg>
<svg class="a" style="left:302.50px;top:519.48px" width="19" height="16" viewBox="0 0 19 16"><path d="M1 3 Q1 1 3 1 L7 1 L9 3 L16 3 Q17.5 3 17.5 4.5 L17.5 13 Q17.5 14.5 16 14.5 L2.5 14.5 Q1 14.5 1 13 Z" fill="#f8dc8b" stroke="#d5a44c" stroke-width="1.3"/><path d="M1.7 5.6 L16.8 5.6" stroke="#d9ae5e" stroke-width="1"/><path d="M1.7 4.4 L16.8 4.4" stroke="#fbe9b0" stroke-width="1.2"/></svg>
<div class="a t" style="left:344.50px;top:519.94px;font-size:16px;line-height:16px;color:#333;transform:scaleY(1.09);transform-origin:0 5px;letter-spacing:0.27px;">Финансовая деятельность</div>
<div class="a" style="left:1047.20px;top:712.00px;width:122.80px;height:26.50px;border:1px solid #a7a7a7;border-top:none;background:#fff"></div>
<div class="a" style="left:1077.50px;top:712.00px;width:1.20px;height:26.00px;background:#a7a7a7"></div>
<div class="a" style="left:1108.20px;top:712.00px;width:1.20px;height:26.00px;background:#a7a7a7"></div>
<div class="a" style="left:1138.50px;top:712.00px;width:1.20px;height:26.00px;background:#a7a7a7"></div>
<svg class="a" style="left:1056.00px;top:721.00px" width="14" height="9" viewBox="0 0 14 9"><rect x="1" y="0.3" width="11" height="1.3" fill="#a9a9a9"/><path d="M6.5 1.5 L12 7 L1 7 Z" fill="#a9a9a9"/></svg>
<svg class="a" style="left:1087.00px;top:722.00px" width="13" height="7" viewBox="0 0 13 7"><path d="M6 0.5 L11.7 6 L0.5 6 Z" fill="#a9a9a9"/></svg>
<svg class="a" style="left:1117.50px;top:722.00px" width="13" height="7" viewBox="0 0 13 7"><path d="M0.5 0.5 L11.7 0.5 L6 6 Z" fill="#a9a9a9"/></svg>
<svg class="a" style="left:1147.50px;top:721.50px" width="14" height="9" viewBox="0 0 14 9"><path d="M1 0.5 L12 0.5 L6.5 6 Z" fill="#a9a9a9"/><rect x="1" y="6.5" width="11" height="1.3" fill="#a9a9a9"/></svg>
</body></html>
